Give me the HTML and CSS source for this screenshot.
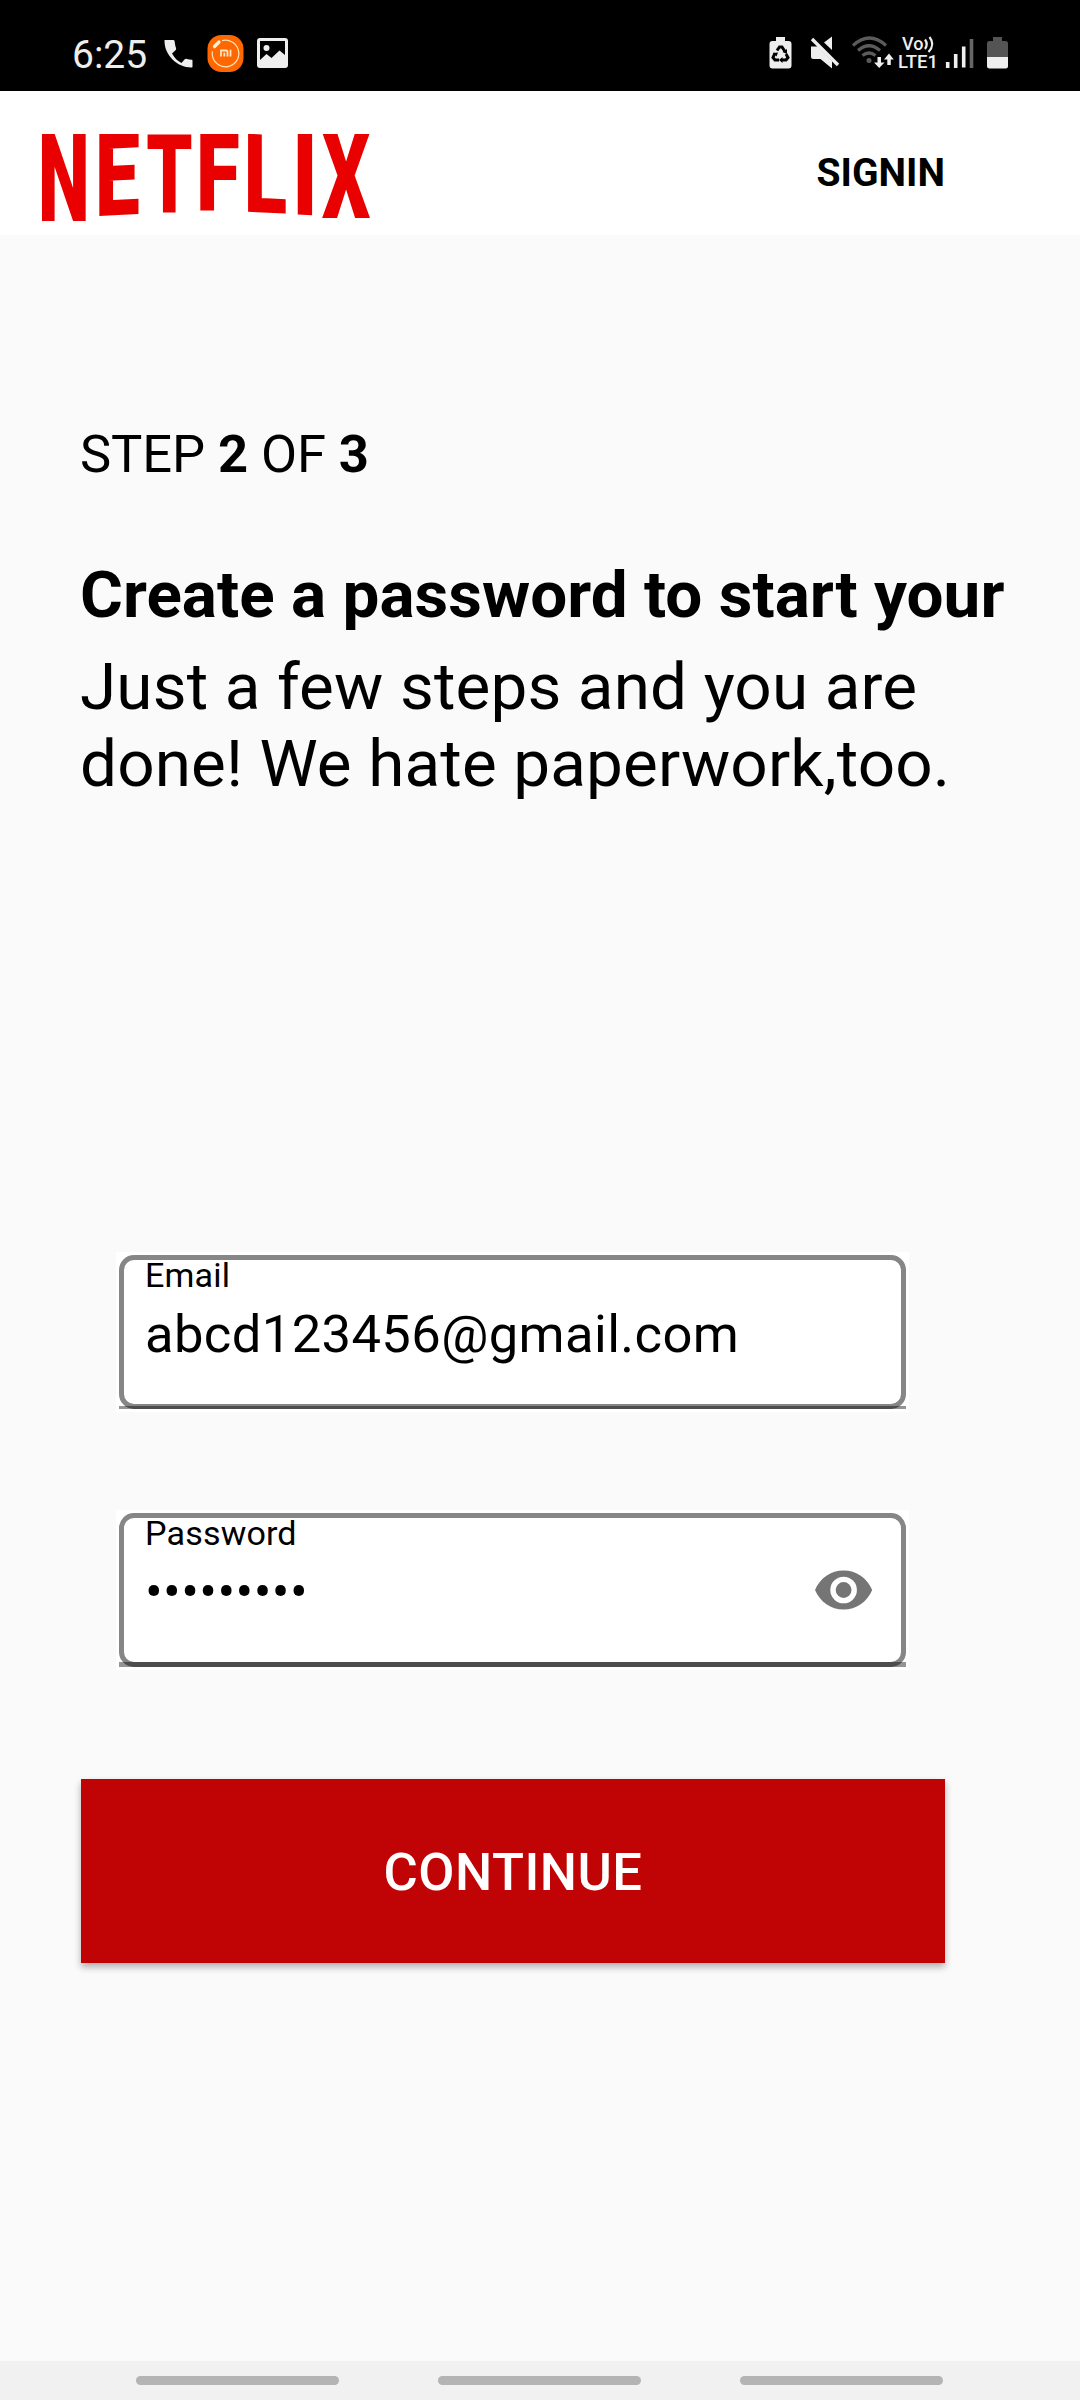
FILE: index.html
```html
<!DOCTYPE html>
<html lang="en">
<head>
<meta charset="utf-8">
<title>Netflix</title>
<link rel="stylesheet" href="styles.css">
</head>
<body>
<div class="screen">
  <div class="status">
    <span class="clock">6:25</span>
    <svg class="icons-left" width="130" height="40" viewBox="160 33 130 40">
      <path fill="#eee" d="M165 40h8c1 0 1.500 .5 1.700 1.500.2 2.500 .6 4.500 1.300 6.500.3 1 .1 1.800-.5 2.300l-3.500 3.300c2.500 4.500 5.500 7.500 9.500 9.500l3-3.500c.7-.8 1.500-1 2.500-.6 1.500.5 3 .7 4.600.8.7 0 .9.500.9 1.200v5.500c0 .6-.4 1-1 1C177 67.500 164.500 55 164.500 41c0-.6 0-1 .5-1z"/>
      <rect x="207.500" y="35" width="36" height="37" rx="14" fill="#ff6700"/>
      <circle cx="225.500" cy="53.500" r="13.300" fill="none" stroke="#ffe3b8" stroke-width="1.200" stroke-dasharray="68 15.560" transform="rotate(-105 225.500 53.500)"/>
      <path d="M214.500 46.500l4.500-4.500" stroke="#fff0d0" stroke-width="3.200" stroke-linecap="round"/>
      <path d="M221 56.500v-6h5.200q1.300 0 1.300 1.300v4.700M224.300 52.800v3.700M230.500 49.800v6.700" stroke="#ffe9c8" stroke-width="1.800" fill="none"/>
      <path fill="#eee" fill-rule="evenodd" d="M260 38h25q3 0 3 3v24q0 3-3 3h-25q-3 0-3-3V41q0-3 3-3zM260 41v19l6.500-6 5 4 8-7.500 5.500 4.500V41z"/>
      <circle cx="266.500" cy="48" r="3" fill="#eee"/>
    </svg>
    <svg class="icons-right" width="244" height="44" viewBox="766 31 244 44">
      <path fill="#eee" d="M776 37h9v4h3.500q3 0 3 3v21.500q0 3-3 3h-16q-3 0-3-3V44q0-3 3-3h3.500z"/>
      <g fill="none" stroke="#000" stroke-width="3">
        <path d="M777 50.500l2.500-3.500h2.500l3 4.500M775 53l-2 4.500 2 2.500h4M786 54l2 3.500-2 2.500h-4"/>
      </g>
      <path d="M782.500 57v6l-3.500-3zM773 53l5-.5-1.500 4zM787 49v5l-4.500-2z"/>
      <path fill="#eee" d="M811 46.500h7l14 14.500v7.500L820.500 59h-7q-2.500 0-2.500-2.500zM824 42.500l8-6V50z"/>
      <path d="M812 39l26 26" stroke="#eee" stroke-width="3.300"/>
      <g fill="none" stroke="#5b5b5b" stroke-width="3.200">
        <path d="M853 45.500q16.500-15 33 0M858 50.500q11-9.500 22 0M862.500 55.500q6.500-5 13 0"/>
      </g>
      <circle cx="869" cy="60.500" r="2.500" fill="#5b5b5b"/>
      <path fill="#eee" d="M877.500 57h3.500v5.500h3.500L879.200 68l-5.200-5.500h3.500zM887.300 65h3.500V59.500h3L889 53.500l-5 6h3.300z"/>
      <text x="902" y="50" class="volte">Vo</text>
      <path d="M925 39.500q3.500 5 0 9.500M929.500 37q6 7.500-1 15" fill="none" stroke="#eee" stroke-width="2.200"/>
      <text x="898" y="68" class="volte" textLength="40" lengthAdjust="spacingAndGlyphs">LTE1</text>
      <path d="M947.700 62v6M955.700 54v14M963.700 46.500v21" stroke="#eee" stroke-width="3.600"/>
      <path d="M971.500 39v29" stroke="#666" stroke-width="3.600"/>
      <path fill="#545454" d="M993 37h9v4h3.500q2.500 0 2.500 2.500V58h-21V43.500q0-2.500 2.500-2.500h3.500z"/>
      <path fill="#eee" d="M987 57h21v9q0 2.500-2.500 2.500h-16q-2.500 0-2.500-2.500z"/>
    </svg>
  </div>
  <header class="header">
    <svg class="logo" width="330" height="90" viewBox="41 133 330 90" role="img" aria-label="NETFLIX">
      <clipPath id="flat-top"><rect x="41" y="134" width="330" height="90"/></clipPath>
      <g class="wordmark" clip-path="url(#flat-top)">
        <text transform="matrix(.735 0 0 1.217 38 220.500)">N</text>
        <text transform="matrix(.80 -.04 0 1.155 95 216.200)">E</text>
        <text transform="matrix(.735 0 0 1.090 146.300 211.800)">T</text>
        <text transform="matrix(.8 0 0 1.083 196 211)">F</text>
        <text transform="matrix(.8 .04 0 1.097 243.800 211.500)">L</text>
        <text transform="matrix(.84 .04 0 1.145 292.200 214.300)">I</text>
        <text transform="matrix(.755 0 0 1.180 322 218)">X</text>
      </g>
    </svg>
    <a class="signin">SIGNIN</a>
  </header>
  <main class="main">
    <p class="step">STEP <b>2</b> OF <b>3</b></p>
    <h1 class="title">Create a password to start your</h1>
    <p class="lead">Just a few steps and you are<br>done! We hate paperwork,too.</p>
    <div class="fields">
      <div class="field">
        <div class="box">
          <div class="col"><span class="label">Email</span><span class="value">abcd123456@gmail.com</span></div>
        </div>
      </div>
      <div class="field focused">
        <div class="box">
          <div class="col"><span class="label">Password</span><span class="value">•••••••••</span></div>
          <svg class="eye" width="58" height="40" viewBox="0 0 58 40"><path fill="#757575" fill-rule="evenodd" d="M0 20C5 8 16 .5 28.600 .5S52.200 8 57.200 20C52.200 32 41.200 39.500 28.600 39.500S5 32 0 20zM28.600 6.700a13.300 13.300 0 1 0 0 26.600 13.300 13.300 0 0 0 0-26.600z"/><circle cx="28.600" cy="20" r="7.900" fill="#757575"/></svg>
        </div>
      </div>
    </div>
    <button class="continue">CONTINUE</button>
  </main>
  <nav class="nav"><i class="pill"></i><i class="pill"></i><i class="pill"></i></nav>
</div>
</body>
</html>
```
FILE: styles.css
```css
* { box-sizing: border-box; margin: 0; padding: 0; }
body { font-family: Roboto, "Liberation Sans", sans-serif; color: #000; background: #fafafa; }
.screen { width: 1080px; height: 2400px; display: flex; flex-direction: column; overflow: hidden; }
.status { height: 91px; flex: none; background: #000; color: #eee; display: flex; padding-left: 72px; }
.clock { width: 88px; font-size: 39px; line-height: 46px; padding-top: 32px; white-space: nowrap; }
.icons-left { margin-top: 33px; }
.icons-right { margin: 31px 70px 0 auto; }
.volte { font: 500 18px Roboto, sans-serif; fill: #eee; }
.header { height: 144px; flex: none; background: #fff; display: flex; justify-content: space-between; padding: 42px 135px 0 41px; }
.wordmark { font: 900 100px Roboto, sans-serif; fill: #e90000; }
.signin { font-size: 39px; line-height: 46px; font-weight: 700; padding-top: 17px; }
.main { flex: 1; padding: 188px 0 0 80px; }
.step { font-size: 52.5px; line-height: 62px; letter-spacing: -.1px; }
.step b { font-weight: 700; }
.title { margin-top: 71px; font-size: 65.6px; line-height: 77px; font-weight: 700; letter-spacing: .03px; white-space: nowrap; }
.lead { margin-top: 15px; font-size: 65.6px; line-height: 77px; letter-spacing: .15px; white-space: nowrap; }
.fields { display: flex; flex-direction: column; gap: 98px; margin: 450px 0 0 36px; width: 793px; }
.field { height: 160px; background: #fff; padding: 3px; }
.box { position: relative; height: 154px; border: 5px solid #868686; border-radius: 15px; padding: 0 28px 0 21px; display: flex; justify-content: space-between; align-items: flex-start; }
.box::after { content: ""; position: absolute; left: -5px; right: -5px; bottom: -5px; height: 3px; background: rgba(0, 0, 0, .42); }
.focused .box::after { height: 5px; }
.col { display: flex; flex-direction: column; }
.label { font-size: 34.1px; line-height: 40px; margin-top: -5px; letter-spacing: .15px; }
.value { font-size: 52.5px; line-height: 62px; margin-top: 8px; letter-spacing: .4px; }
.eye { margin-top: 52px; }
.continue { display: block; margin: 109px 0 0 1px; padding-top: 2px; width: 864px; height: 184px; border: 0; background: #c00405; color: #fff; font: 500 52.5px Roboto, sans-serif; letter-spacing: .5px; box-shadow: 0 4px 7px rgba(0, 0, 0, .3); }
.nav { height: 39px; flex: none; background: #f1f1f1; display: flex; gap: 99px; padding: 15px 0 0 136px; }
.pill { width: 203px; height: 9px; border-radius: 4.500px; background: #b4b4b4; }
```
